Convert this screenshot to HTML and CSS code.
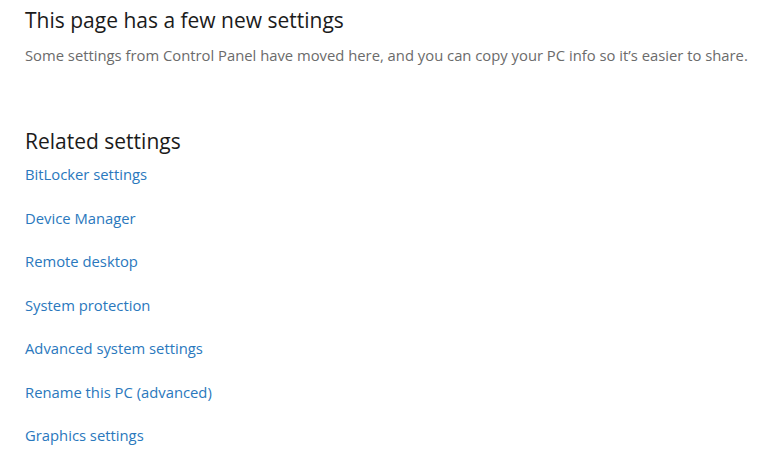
FILE: index.html
```html
<!DOCTYPE html>
<html lang="en">
<head>
<meta charset="utf-8">
<title>Settings</title>
<link rel="stylesheet" href="styles.css">
</head>
<body>
<main class="page">
  <section class="notice">
    <h1 class="title">This page has a few new settings</h1>
    <p class="desc">Some settings from Control Panel have moved here, and you can copy your PC info so it’s easier to share.</p>
  </section>
  <section class="related">
    <h2 class="title">Related settings</h2>
    <ul class="links">
      <li><a class="link" href="#">BitLocker settings</a></li>
      <li><a class="link" href="#">Device Manager</a></li>
      <li><a class="link" href="#">Remote desktop</a></li>
      <li><a class="link" href="#">System protection</a></li>
      <li><a class="link" href="#">Advanced system settings</a></li>
      <li><a class="link" href="#">Rename this PC (advanced)</a></li>
      <li><a class="link" href="#">Graphics settings</a></li>
    </ul>
  </section>
</main>
</body>
</html>
```
FILE: styles.css
```css
html, body {
  margin: 0;
  padding: 0;
  background: #ffffff;
}
body {
  font-family: "Open Sans", "Noto Sans", "Liberation Sans", sans-serif;
  color: #1b1b1b;
}
.page {
  padding: 6px 0 0 25px;
  display: flex;
  flex-direction: column;
}
.title {
  margin: 0;
  font-size: 21px;
  font-weight: 400;
  line-height: 28px;
  color: #1b1b1b;
  white-space: nowrap;
}
.desc {
  margin: 11px 0 0 0;
  font-size: 14.8px;
  line-height: 20px;
  color: #6b6b6b;
  white-space: nowrap;
}
.related {
  margin-top: 62px;
}
.links {
  list-style: none;
  margin: 9px 0 0 0;
  padding: 0;
  display: flex;
  flex-direction: column;
  gap: 23.5px;
}
.link {
  display: block;
  font-size: 14.8px;
  line-height: 20px;
  color: #2a78bd;
  text-decoration: none;
}
```
